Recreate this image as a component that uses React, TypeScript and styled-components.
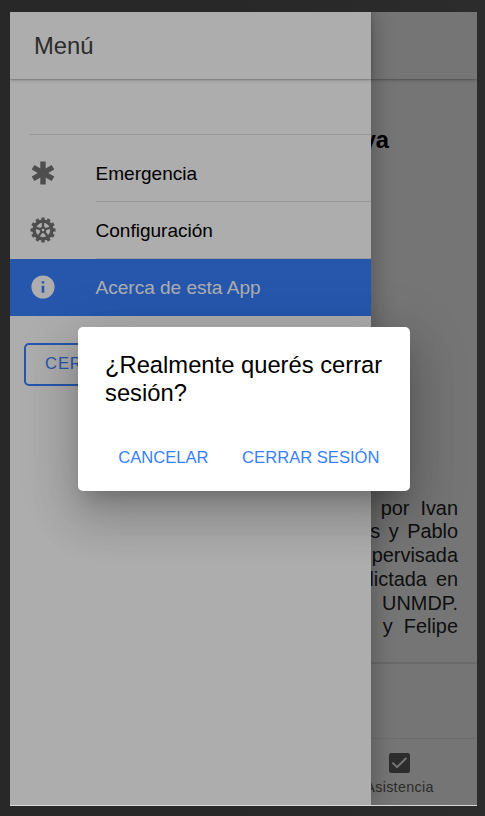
import React from 'react';
import styled, { createGlobalStyle } from 'styled-components';

const GlobalStyle = createGlobalStyle`
  * { box-sizing: border-box; }
  body {
    margin: 0;
    background: #292929;
    font-family: 'Liberation Sans', Arial, sans-serif;
  }
`;

const Desktop = styled.div`
  height: 816px;
  padding: 12px 8px 10px 10px;
  background: linear-gradient(90deg, #282828 50%, #2c2c2c 98%);
  overflow: hidden;
`;

const Device = styled.div`
  position: relative;
  width: 467px;
  height: 794px;
  overflow: hidden;
  border-bottom: 1px solid #d9d9d9;
`;

const Page = styled.main`
  display: flex;
  flex-direction: column;
  height: 793px;
  background: #fff;
`;

const Toolbar = styled.header`
  flex: none;
  display: flex;
  align-items: center;
  height: 67px;
  padding: 1px 24px 0;
  font-size: 23.8px;
  color: #424242;
  background: #fff;
  box-shadow: 0 1px 1px rgba(0, 0, 0, 0.12), 0 1px 4px rgba(0, 0, 0, 0.22);
`;

const Article = styled.section`
  flex: none;
  display: flex;
  flex-direction: column;
  height: 585px;
  padding: 47px 19px 0;
  border-bottom: 2px solid #e6e6e6;
`;

const ArticleTitle = styled.h1`
  margin: 0 69px 0 0;
  text-align: right;
  font-size: 23.7px;
  line-height: 28px;
`;

const Credits = styled.div`
  margin-top: 342.7px;
  font-size: 19.9px;
  line-height: 23.7px;
  color: #262626;
`;

const CreditLine = styled.div<{ $gap?: number }>`
  display: flex;
  justify-content: flex-end;
  gap: ${({ $gap = 6 }) => $gap}px;
`;

const TabBar = styled.nav`
  flex: none;
  display: flex;
  justify-content: flex-end;
  height: 67px;
  margin-top: auto;
  padding-right: 10px;
  border-top: 1px solid #ededed;
`;

const Tab = styled.div`
  display: flex;
  flex-direction: column;
  align-items: center;
  width: 135px;
  padding-top: 14px;
  color: #5f5f5f;
  font-size: 14.3px;
  letter-spacing: 0.32px;
  line-height: 17px;
  svg { margin-bottom: 6px; }
`;

const Scrim = styled.div`
  position: absolute;
  inset: 0;
  background: rgba(0, 0, 0, 0.32);
`;

const Drawer = styled.aside`
  position: absolute;
  inset: 0 auto 0 0;
  width: 361px;
  background: #fff;
  box-shadow: 5px 0 19px rgba(0, 0, 0, 0.22);
`;

const MenuList = styled.div`
  padding-top: 55px;
`;

const ListHead = styled.div`
  height: 1px;
  margin-left: 19px;
  background: #e2e2e2;
`;

const MenuItem = styled.div<{ $active?: boolean }>`
  display: flex;
  align-items: center;
  height: 57px;
  padding-left: 19px;
  color: ${({ $active }) => ($active ? '#fff' : '#000')};
  background: ${({ $active }) => ($active ? '#3880ff' : 'transparent')};
  svg { flex: none; margin-bottom: 1px; color: ${({ $active }) => ($active ? '#fff' : '#737373')}; }
`;

const MenuLabel = styled.span<{ $line?: boolean }>`
  flex: 1;
  display: flex;
  align-items: center;
  height: 57px;
  margin-left: 38.5px;
  padding-top: 2px;
  font-size: 19.05px;
  border-bottom: 1px solid ${({ $line }) => ($line ? '#e0e0e0' : 'transparent')};
`;

const ItemGroup = styled.div`
  padding-top: 10px;
`;

const LogoutButton = styled.button`
  display: flex;
  align-items: center;
  width: 176px;
  height: 43px;
  margin: 26.5px 0 0 14px;
  padding: 0 0 1px 19px;
  border: 2px solid #3880ff;
  border-radius: 5px;
  background: transparent;
  color: #3880ff;
  font: 16.6px 'Liberation Sans', Arial, sans-serif;
  letter-spacing: 0.9px;
`;

const Dialog = styled.div`
  position: absolute;
  left: 67.5px;
  top: 314.5px;
  width: 332.5px;
  height: 164px;
  display: flex;
  flex-direction: column;
  border-radius: 5px;
  background: #fff;
  box-shadow: 0 13px 18px -8px rgba(0, 0, 0, 0.2),
    0 28px 45px 4px rgba(0, 0, 0, 0.14), 0 11px 55px 9px rgba(0, 0, 0, 0.12);
`;

const DialogTitle = styled.h2`
  margin: 0;
  padding: 24.5px 20px 0 27.5px;
  font-size: 23.75px;
  font-weight: 400;
  line-height: 28px;
  color: #000;
`;

const DialogActions = styled.div`
  display: flex;
  justify-content: flex-end;
  gap: 33.5px;
  margin-top: auto;
  padding: 0 30.5px 23px 0;
`;

const DialogButton = styled.button`
  padding: 0;
  border: 0;
  background: none;
  color: #3880ff;
  font: 16.6px/20px 'Liberation Sans', Arial, sans-serif;
`;

const spin = (count: number) => Array.from({ length: count }, (_, i) => (i * 360) / count);

const AsteriskIcon = () => (
  <svg width="28" height="28" viewBox="-14 -14 28 28">
    {[0, 60, 120].map((a) => (
      <rect key={a} x="-2.7" y="-11.5" width="5.4" height="23" fill="currentColor" transform={`rotate(${a})`} />
    ))}
  </svg>
);

const CogIcon = () => (
  <svg width="28" height="28" viewBox="-14 -14 28 28" fill="none" stroke="currentColor">
    <circle r="8.9" strokeWidth="3.4" />
    {spin(12).map((a) => (
      <path key={a} d="M0-9V-12.5" strokeWidth="3.3" transform={`rotate(${a})`} />
    ))}
    {spin(5).map((a) => (
      <path key={a} d="M0-2V-8" strokeWidth="2.4" transform={`rotate(${a})`} />
    ))}
    <circle r="2.3" strokeWidth="2" />
  </svg>
);

const InfoIcon = () => (
  <svg width="28" height="28" viewBox="-14 -14 28 28">
    <path
      fill="currentColor"
      fillRule="evenodd"
      d="M0-11.6a11.6 11.6 0 1 0 0 23.2a11.6 11.6 0 1 0 0-23.2ZM-1.3-5.8H1.3V-3.4H-1.3ZM-1.3-1.2H1.3V5.8H-1.3Z"
    />
  </svg>
);

const CheckboxIcon = () => (
  <svg width="21" height="20" viewBox="0 0 21 20">
    <rect width="21" height="20" rx="2.3" fill="#626262" />
    <path d="M3.4 9.6 8 14.2 17.4 5" fill="none" stroke="#fff" strokeWidth="2" />
  </svg>
);

export default function App() {
  return (
    <>
      <GlobalStyle />
      <Desktop>
        <Device>
          <Page>
            <Toolbar />
            <Article>
              <ArticleTitle>ya</ArticleTitle>
              <Credits>
                <CreditLine $gap={11}><span>por</span><span>Ivan</span></CreditLine>
                <CreditLine $gap={8.5}><span>s</span><span>y</span><span>Pablo</span></CreditLine>
                <CreditLine>supervisada</CreditLine>
                <CreditLine $gap={9}><span>dictada</span><span>en</span></CreditLine>
                <CreditLine>UNMDP.</CreditLine>
                <CreditLine $gap={11}><span>.</span><span>y</span><span>Felipe</span></CreditLine>
              </Credits>
            </Article>
            <TabBar>
              <Tab><CheckboxIcon />Asistencia</Tab>
            </TabBar>
          </Page>
          <Scrim />
          <Drawer>
            <Toolbar>Menú</Toolbar>
            <MenuList>
              <ListHead />
              <ItemGroup>
                <MenuItem><AsteriskIcon /><MenuLabel $line>Emergencia</MenuLabel></MenuItem>
                <MenuItem><CogIcon /><MenuLabel $line>Configuración</MenuLabel></MenuItem>
                <MenuItem $active><InfoIcon /><MenuLabel>Acerca de esta App</MenuLabel></MenuItem>
              </ItemGroup>
            </MenuList>
            <LogoutButton>CERRAR SESIÓN</LogoutButton>
          </Drawer>
          <Scrim />
          <Dialog role="dialog">
            <DialogTitle>¿Realmente querés cerrar sesión?</DialogTitle>
            <DialogActions>
              <DialogButton>CANCELAR</DialogButton>
              <DialogButton>CERRAR SESIÓN</DialogButton>
            </DialogActions>
          </Dialog>
        </Device>
      </Desktop>
    </>
  );
}
